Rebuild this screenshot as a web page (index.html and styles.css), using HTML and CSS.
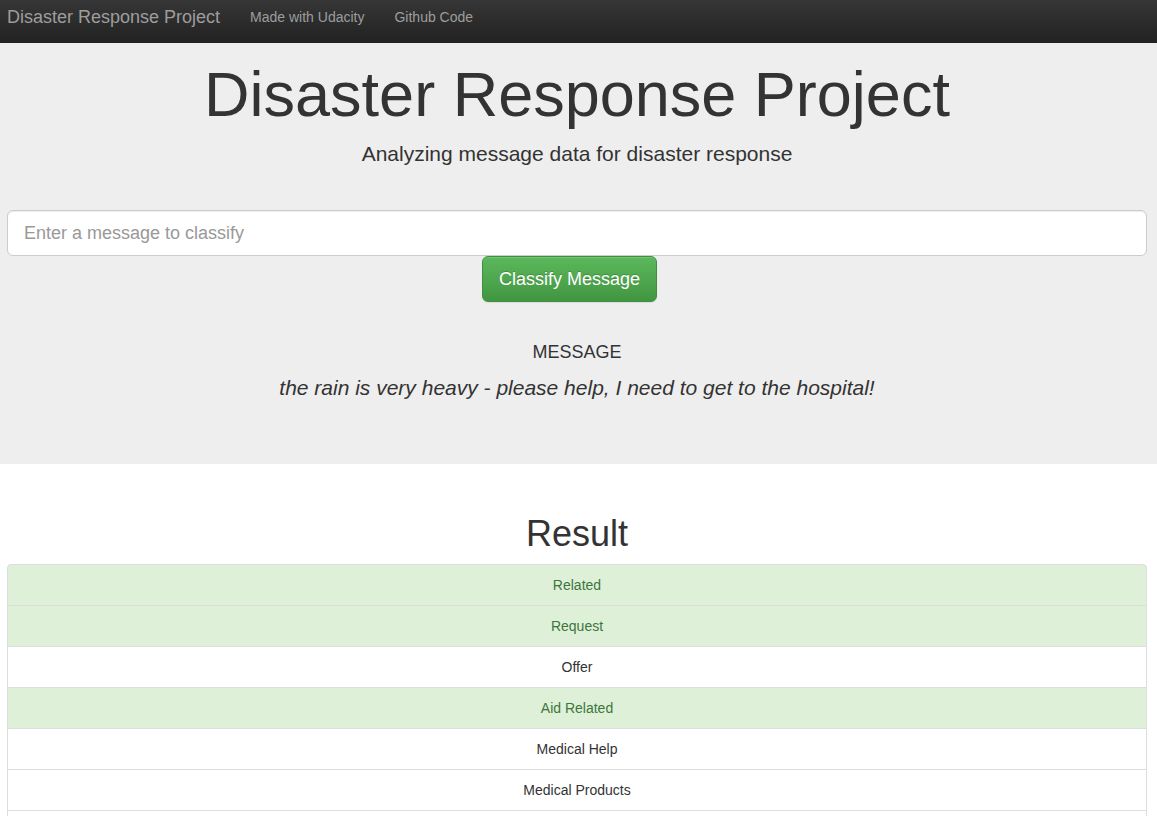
FILE: index.html
```html
<!DOCTYPE html>
<html lang="en">
<head>
<meta charset="utf-8">
<title>Disaster Response Project</title>
<link rel="stylesheet" href="styles.css">
</head>
<body>
<nav class="navbar">
  <a class="brand" href="#">Disaster Response Project</a>
  <a class="nav-link" href="#">Made with Udacity</a>
  <a class="nav-link" href="#">Github Code</a>
</nav>
<header class="jumbotron">
  <h1 class="title">Disaster Response Project</h1>
  <p class="subtitle">Analyzing message data for disaster response</p>
  <form class="classify-form">
    <input class="query-input" type="text" placeholder="Enter a message to classify">
    <div class="button-row">
      <button type="button" class="btn-success">Classify Message</button>
    </div>
  </form>
  <div class="message-label">MESSAGE</div>
  <div class="message-text">the rain is very heavy - please help, I need to get to the hospital!</div>
</header>
<main class="results">
  <h2 class="result-title">Result</h2>
  <ul class="list-group">
    <li class="list-item success">Related</li>
    <li class="list-item success">Request</li>
    <li class="list-item">Offer</li>
    <li class="list-item success">Aid Related</li>
    <li class="list-item">Medical Help</li>
    <li class="list-item">Medical Products</li>
    <li class="list-item">Search And Rescue</li>
    <li class="list-item">Security</li>
  </ul>
</main>
</body>
</html>
```
FILE: styles.css
```css
html, body {
  margin: 0;
  padding: 0;
}
body {
  font-family: "Liberation Sans", Arial, sans-serif;
  font-size: 14px;
  line-height: 1.42857;
  color: #333;
  background: #fff;
}
.navbar {
  height: 43px;
  box-sizing: border-box;
  background: linear-gradient(to bottom, #363636 0%, #222 100%);
  display: flex;
  align-items: flex-start;
  padding-left: 7px;
}
.brand {
  font-size: 18px;
  line-height: 20px;
  padding-top: 7px;
  color: #9d9d9d;
  text-decoration: none;
  margin-right: 15px;
}
.nav-link {
  font-size: 14px;
  line-height: 20px;
  padding: 7px 15px 0;
  color: #9d9d9d;
  text-decoration: none;
}
.jumbotron {
  background: #eee;
  height: 421px;
  box-sizing: border-box;
  padding: 17px 10px 0 7px;
  text-align: center;
}
.title {
  margin: 0;
  font-size: 63px;
  line-height: 69px;
  font-weight: 500;
  color: #333;
}
.subtitle {
  margin: 10px 0 0;
  font-size: 21px;
  line-height: 30px;
  font-weight: 200;
}
.classify-form {
  margin-top: 41px;
  text-align: left;
}
.query-input {
  display: block;
  width: 100%;
  box-sizing: border-box;
  height: 46px;
  padding: 10px 16px;
  font-family: inherit;
  font-size: 18px;
  line-height: 1.3333;
  color: #555;
  background: #fff;
  border: 1px solid #ccc;
  border-radius: 6px;
  box-shadow: inset 0 1px 1px rgba(0,0,0,.075);
  outline: none;
}
.query-input::placeholder {
  color: #999;
}
.button-row {
  display: flex;
  padding-left: 475px;
}
.btn-success {
  height: 46px;
  box-sizing: border-box;
  padding: 11px 16px 9px;
  font-family: inherit;
  font-size: 18px;
  line-height: 1.3333;
  color: #fff;
  background: linear-gradient(to bottom, #5cb85c 0%, #419641 100%);
  border: 1px solid #3e8f3e;
  border-radius: 6px;
  text-shadow: 0 -1px 0 rgba(0,0,0,.2);
  box-shadow: inset 0 1px 0 rgba(255,255,255,.15), 0 1px 1px rgba(0,0,0,.075);
  cursor: pointer;
}
.message-label {
  margin-top: 40px;
  font-size: 18px;
  line-height: 20px;
}
.message-text {
  margin-top: 11px;
  font-size: 21px;
  line-height: 30px;
  font-style: italic;
}
.results {
  padding: 0 10px 0 7px;
}
.result-title {
  margin: 50px 0 10px;
  font-size: 36px;
  line-height: 40px;
  font-weight: 500;
  text-align: center;
}
.list-group {
  list-style: none;
  margin: 0;
  padding: 0;
}
.list-item {
  padding: 10px 15px;
  line-height: 20px;
  border: 1px solid #ddd;
  margin-bottom: -1px;
  background: #fff;
  text-align: center;
}
.list-item:first-child {
  border-top-left-radius: 4px;
  border-top-right-radius: 4px;
}
.list-item.success {
  background: #dff0d8;
  color: #3c763d;
}
```
